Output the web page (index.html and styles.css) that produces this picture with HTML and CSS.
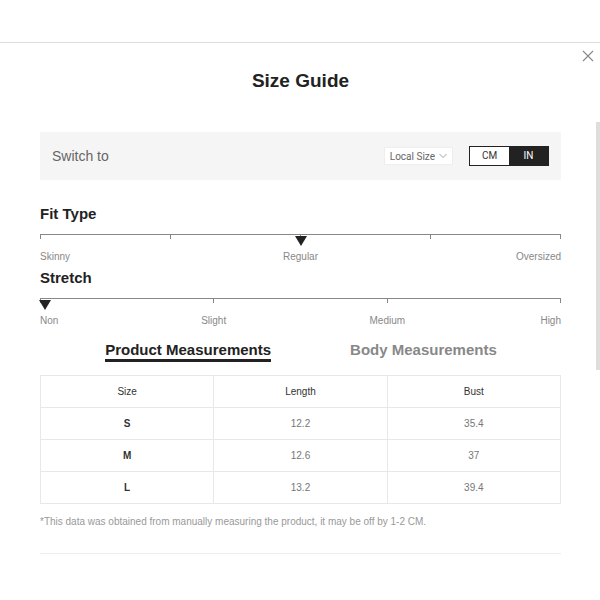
FILE: index.html
```html
<!DOCTYPE html>
<html>
<head>
<meta charset="utf-8">
<link rel="stylesheet" href="styles.css">
</head>
<body>
<div class="topbar"></div>
<div class="modal">
  <svg class="close" width="12" height="12" viewBox="0 0 12 12"><path d="M1 1 L11 11 M11 1 L1 11" stroke="#888" stroke-width="1.1" fill="none"/></svg>
  <div class="scrollbar"></div>
  <h1 class="title">Size Guide</h1>
  <div class="switch">
    <span class="switch-label">Switch to</span>
    <div class="switch-controls">
      <div class="select">Local Size <svg width="8" height="6" viewBox="0 0 8 6"><path d="M0.5 1 L4 4.5 L7.5 1" stroke="#999" stroke-width="0.9" fill="none"/></svg></div>
      <div class="units"><span class="unit">CM</span><span class="unit active">IN</span></div>
    </div>
  </div>

  <h2 class="section">Fit Type</h2>
  <div class="track">
    <i class="tick"></i><i class="tick"></i><i class="tick"></i><i class="tick"></i><i class="tick"></i>
    <span class="marker marker-center"></span>
  </div>
  <div class="labels labels3">
    <span class="l-left">Skinny</span><span class="l-center">Regular</span><span class="l-right">Oversized</span>
  </div>

  <h2 class="section section2">Stretch</h2>
  <div class="track">
    <i class="tick"></i><i class="tick"></i><i class="tick"></i><i class="tick"></i>
    <span class="marker marker-left"></span>
  </div>
  <div class="labels labels6">
    <span class="l-left c1">Non</span><span class="l-center c2">Slight</span><span class="l-center c3">Medium</span><span class="l-right c4">High</span>
  </div>

  <div class="tabs">
    <span class="tab active">Product Measurements</span>
    <span class="tab">Body Measurements</span>
  </div>

  <table class="sizes">
    <thead><tr><th>Size</th><th>Length</th><th>Bust</th></tr></thead>
    <tbody>
      <tr><td class="sz">S</td><td>12.2</td><td>35.4</td></tr>
      <tr><td class="sz">M</td><td>12.6</td><td>37</td></tr>
      <tr><td class="sz">L</td><td>13.2</td><td>39.4</td></tr>
    </tbody>
  </table>
  <p class="note">*This data was obtained from manually measuring the product, it may be off by 1-2 CM.</p>
  <div class="divider"></div>
</div>
</body>
</html>
```
FILE: styles.css
```css
html, body { margin: 0; padding: 0; background: #fff; }
body { font-family: "Liberation Sans", Arial, sans-serif; color: #222; width: 600px; height: 600px; overflow: hidden; }
.topbar { height: 42px; border-bottom: 1px solid #dcdcdc; }
.modal { position: relative; padding: 27px 39px 0 40px; }
.close { position: absolute; right: 6px; top: 7px; }
.scrollbar { position: absolute; right: 0; top: 79px; width: 4px; height: 248px; background: #dedede; }
.title { margin: 0; text-align: center; font-size: 19px; line-height: 22px; font-weight: bold; color: #222; }
.switch { margin-top: 40px; height: 48px; background: #f5f5f5; display: flex; align-items: center; justify-content: space-between; padding: 0 12px; }
.switch-label { font-size: 14px; color: #666; }
.switch-controls { display: flex; align-items: center; gap: 16px; }
.select { height: 18px; background: #fff; border: 1px solid #eee; box-sizing: border-box; padding: 0 5px; display: flex; align-items: center; gap: 4px; font-family: Roboto, "Liberation Sans", sans-serif; font-size: 10px; color: #666; }
.units { display: flex; border: 1px solid #222; }
.unit { width: 39px; height: 18px; line-height: 18px; text-align: center; font-family: Roboto, "Liberation Sans", sans-serif; font-size: 10px; color: #333; background: #fff; }
.unit.active { background: #222; color: #fff; }
.section { margin: 25px 0 0; font-size: 15px; line-height: 17px; font-weight: bold; color: #222; }
.section2 { margin-top: 6px; }
.track { position: relative; margin-top: 12px; border-top: 1px solid #888; height: 16px; display: flex; justify-content: space-between; }
.tick { display: block; width: 1px; height: 4px; background: #888; }
.marker { position: absolute; top: 1px; width: 0; height: 0; border-left: 6px solid transparent; border-right: 6px solid transparent; border-top: 10px solid #222; }
.marker-center { left: calc(50% - 6px); }
.marker-left { left: -1px; }
.labels { display: grid; font-size: 10px; line-height: 12px; color: #888; }
.labels3 { grid-template-columns: 1fr 1fr 1fr; }
.labels6 { grid-template-columns: repeat(6, 1fr); }
.l-left { text-align: left; }
.l-center { text-align: center; }
.l-right { text-align: right; }
.c1 { grid-column: 1; }
.c2 { grid-column: 2 / 4; }
.c3 { grid-column: 4 / 6; }
.c4 { grid-column: 6; }
.tabs { margin-top: 15px; display: flex; justify-content: center; gap: 79px; padding-left: 1px; }
.tab { font-size: 15px; line-height: 16px; font-weight: bold; color: #888; padding-bottom: 1px; border-bottom: 3px solid transparent; }
.tab.active { color: #222; border-bottom-color: #222; }
.sizes { margin-top: 13px; width: 100%; border-collapse: collapse; table-layout: fixed; font-size: 10px; }
.sizes th, .sizes td { border: 1px solid #e8e8e8; height: 31px; padding: 0; text-align: center; color: #777; font-weight: normal; }
.sizes th { height: 31px; color: #333; }
.sizes td.sz { color: #333; font-weight: bold; }
.note { margin: 12px 0 0; font-size: 10px; line-height: 12px; color: #999; }
.divider { margin-top: 25px; border-top: 1px solid #eee; }
```
